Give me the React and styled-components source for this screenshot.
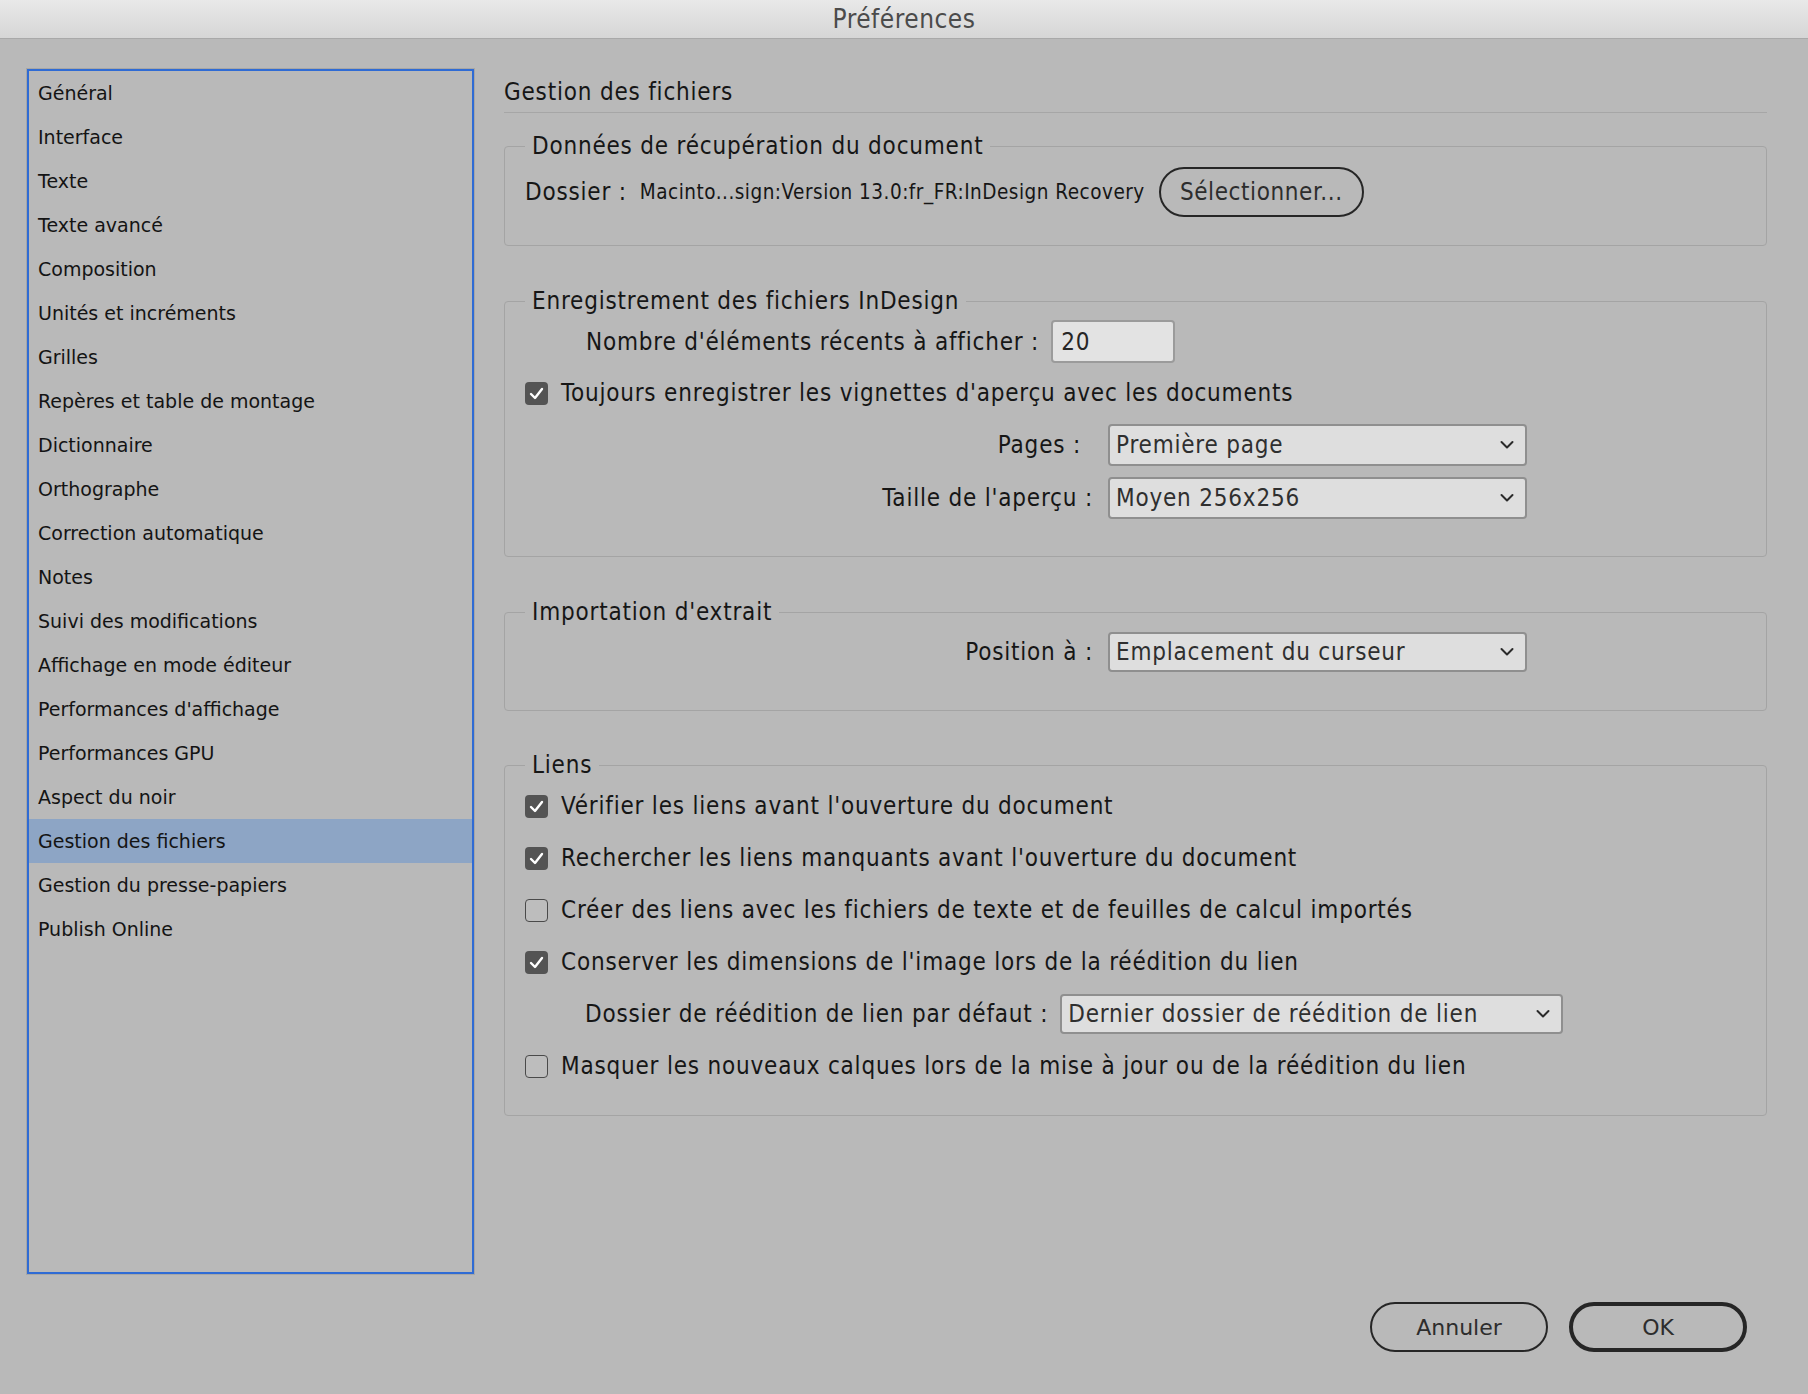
import React from 'react';
import styled, { createGlobalStyle } from 'styled-components';

const narrow = `"DejaVu Sans Condensed", "Liberation Sans Narrow", "DejaVu Sans", sans-serif`;
const lucida = `"DejaVu Sans", "Liberation Sans", sans-serif`;

const GlobalStyle = createGlobalStyle`
  html, body {
    margin: 0;
    padding: 0;
    background: #b9b9b9;
  }
  * {
    box-sizing: border-box;
  }
`;

const Window = styled.div`
  width: 1808px;
  height: 1394px;
  background: #b9b9b9;
  display: flex;
  flex-direction: column;
  overflow: hidden;
  color: #161616;
`;

const TitleBar = styled.div`
  height: 39px;
  flex-shrink: 0;
  display: flex;
  align-items: center;
  justify-content: center;
  background: linear-gradient(#e9e9e9, #d6d6d6);
  border-bottom: 1px solid #a9a9a9;
  font-family: ${narrow};
  font-stretch: condensed;
  font-size: 26px;
  letter-spacing: 0.5px;
  color: #4b4b4b;
`;

const Body = styled.div`
  display: flex;
  padding: 30px 41px 0 27px;
`;

const Sidebar = styled.ul`
  list-style: none;
  margin: 0;
  padding: 0;
  width: 447px;
  height: 1205px;
  flex-shrink: 0;
  border: 2px solid #2f6bd4;
  box-shadow: 0 0 0 1px #a6a6a6;
`;

const NavItem = styled.li`
  height: 44px;
  display: flex;
  align-items: center;
  padding-left: 9px;
  font-family: ${lucida};
  font-size: 19px;
  color: #141414;
  background: ${p => (p.$active ? '#8da5c5' : 'transparent')};
`;

const Panel = styled.div`
  flex: 1;
  margin-left: 30px;
  padding-top: 1px;
  display: flex;
  flex-direction: column;
  font-family: ${narrow};
  font-stretch: condensed;
  font-size: 24px;
  letter-spacing: 0.8px;
`;

const PageTitle = styled.h2`
  margin: 0;
  padding: 7px 0 5px;
  font-size: 24px;
  font-weight: normal;
  line-height: 30px;
  border-bottom: 1px solid #a6a6a6;
`;

const Group = styled.fieldset`
  margin: ${p => p.$top || 40}px 0 0;
  padding: ${p => p.$pt}px 20px ${p => p.$pb}px;
  border: 1px solid #a4a4a4;
  border-radius: 4px;
  display: flex;
  flex-direction: column;
  gap: ${p => p.$gap || 0}px;
  min-width: 0;
`;

const Legend = styled.legend`
  padding: 0 7px;
  line-height: 30px;
  font-size: 24px;
`;

const Row = styled.div`
  display: flex;
  align-items: center;
  height: ${p => p.$h || 40}px;
  padding-left: ${p => p.$indent || 0}px;
  gap: ${p => p.$gap || 12}px;
`;

const GridRow = styled.div`
  display: grid;
  grid-template-columns: 568px 419px;
  column-gap: 15px;
  align-items: center;
  height: ${p => p.$h || 42}px;
`;

const Label = styled.span`
  white-space: nowrap;
  text-align: ${p => (p.$right ? 'right' : 'left')};
  padding-right: ${p => p.$pr || 0}px;
`;

const PathText = styled.span`
  font-size: 20.5px;
  letter-spacing: 0.5px;
  margin: 0 2px 0 1px;
  white-space: nowrap;
`;

const PillButton = styled.button`
  width: ${p => p.$w || 178}px;
  height: 50px;
  border-radius: 25px;
  border: ${p => (p.$primary ? '4px' : '2px')} solid #262626;
  background: transparent;
  color: #2d2d2d;
  font-family: ${p => (p.$narrow ? narrow : lucida)};
  font-stretch: ${p => (p.$narrow ? 'condensed' : 'normal')};
  font-size: ${p => (p.$narrow ? 24 : 22)}px;
  letter-spacing: ${p => (p.$narrow ? 0.6 : 0)}px;
  padding: 0;
  flex-shrink: 0;
`;

const TextInput = styled.div`
  width: 124px;
  height: 43px;
  background: #e3e3e3;
  border: 2px solid #9b9b9b;
  border-radius: 4px;
  display: flex;
  align-items: center;
  padding-left: 8px;
  color: #262626;
`;

const SelectBox = styled.div`
  width: ${p => p.$w}px;
  height: ${p => p.$h || 42}px;
  background: #dedede;
  border: 2px solid #8f8f8f;
  border-radius: 4px;
  display: flex;
  align-items: center;
  justify-content: space-between;
  padding: 0 10px 0 6px;
  color: #2f2f2f;
  white-space: nowrap;
`;

const Box = styled.span`
  width: 23px;
  height: 23px;
  border-radius: 4px;
  flex-shrink: 0;
  display: flex;
  align-items: center;
  justify-content: center;
  background: ${p => (p.$checked ? '#545454' : '#bdbdbd')};
  border: ${p => (p.$checked ? 'none' : '1.5px solid #4a4a4a')};
`;

const Footer = styled.div`
  display: flex;
  justify-content: flex-end;
  gap: 21px;
  padding: 28px 61px 0 0;
`;

const Chevron = () => (
  <svg width="16" height="10" viewBox="0 0 16 10">
    <path d="M2.5 2 L8 7.5 L13.5 2" fill="none" stroke="#2a2a2a" strokeWidth="2" strokeLinecap="round" strokeLinejoin="round" />
  </svg>
);

const Select = ({ value, w, h }) => (
  <SelectBox $w={w} $h={h}>
    <span>{value}</span>
    <Chevron />
  </SelectBox>
);

const Checkbox = ({ checked, children }) => (
  <Row $gap={13} $h={40}>
    <Box $checked={checked}>
      {checked && (
        <svg width="15" height="13" viewBox="0 0 15 13">
          <path d="M2 7 L6 11 L13 2" fill="none" stroke="#fff" strokeWidth="2.4" strokeLinecap="round" strokeLinejoin="round" />
        </svg>
      )}
    </Box>
    <Label>{children}</Label>
  </Row>
);

const navItems = [
  'Général',
  'Interface',
  'Texte',
  'Texte avancé',
  'Composition',
  'Unités et incréments',
  'Grilles',
  'Repères et table de montage',
  'Dictionnaire',
  'Orthographe',
  'Correction automatique',
  'Notes',
  'Suivi des modifications',
  'Affichage en mode éditeur',
  "Performances d'affichage",
  'Performances GPU',
  'Aspect du noir',
  'Gestion des fichiers',
  'Gestion du presse-papiers',
  'Publish Online',
];

export default function App() {
  return (
    <Window>
      <GlobalStyle />
      <TitleBar>Préférences</TitleBar>
      <Body>
        <Sidebar>
          {navItems.map(item => (
            <NavItem key={item} $active={item === 'Gestion des fichiers'}>
              {item}
            </NavItem>
          ))}
        </Sidebar>

        <Panel>
          <PageTitle>Gestion des fichiers</PageTitle>

          <Group $top={18} $pt={6} $pb={28}>
            <Legend>Données de récupération du document</Legend>
            <Row $h={50} $gap={0}>
              <Label>Dossier :</Label>
              <PathText>Macinto...sign:Version 13.0:fr_FR:InDesign Recovery</PathText>
              <PillButton $w={205} $narrow>Sélectionner...</PillButton>
            </Row>
          </Group>

          <Group $pt={4} $pb={37} $gap={10}>
            <Legend>Enregistrement des fichiers InDesign</Legend>
            <Row $h={43} $indent={61}>
              <Label>Nombre d'éléments récents à afficher :</Label>
              <TextInput>20</TextInput>
            </Row>
            <Checkbox checked>Toujours enregistrer les vignettes d'aperçu avec les documents</Checkbox>
            <GridRow $h={43}>
              <Label $right $pr={12}>Pages :</Label>
              <Select value="Première page" w={419} />
            </GridRow>
            <GridRow $h={43}>
              <Label $right>Taille de l'aperçu :</Label>
              <Select value="Moyen 256x256" w={419} />
            </GridRow>
          </Group>

          <Group $pt={5} $pb={38}>
            <Legend>Importation d'extrait</Legend>
            <GridRow $h={40}>
              <Label $right>Position à :</Label>
              <Select value="Emplacement du curseur" w={419} h={40} />
            </GridRow>
          </Group>

          <Group $top={39} $pt={6} $pb={29} $gap={12}>
            <Legend>Liens</Legend>
            <Checkbox checked>Vérifier les liens avant l'ouverture du document</Checkbox>
            <Checkbox checked>Rechercher les liens manquants avant l'ouverture du document</Checkbox>
            <Checkbox>Créer des liens avec les fichiers de texte et de feuilles de calcul importés</Checkbox>
            <Checkbox checked>Conserver les dimensions de l'image lors de la réédition du lien</Checkbox>
            <Row $indent={60}>
              <Label>Dossier de réédition de lien par défaut :</Label>
              <Select value="Dernier dossier de réédition de lien" w={503} h={40} />
            </Row>
            <Checkbox>Masquer les nouveaux calques lors de la mise à jour ou de la réédition du lien</Checkbox>
          </Group>
        </Panel>
      </Body>

      <Footer>
        <PillButton>Annuler</PillButton>
        <PillButton $primary>OK</PillButton>
      </Footer>
    </Window>
  );
}
